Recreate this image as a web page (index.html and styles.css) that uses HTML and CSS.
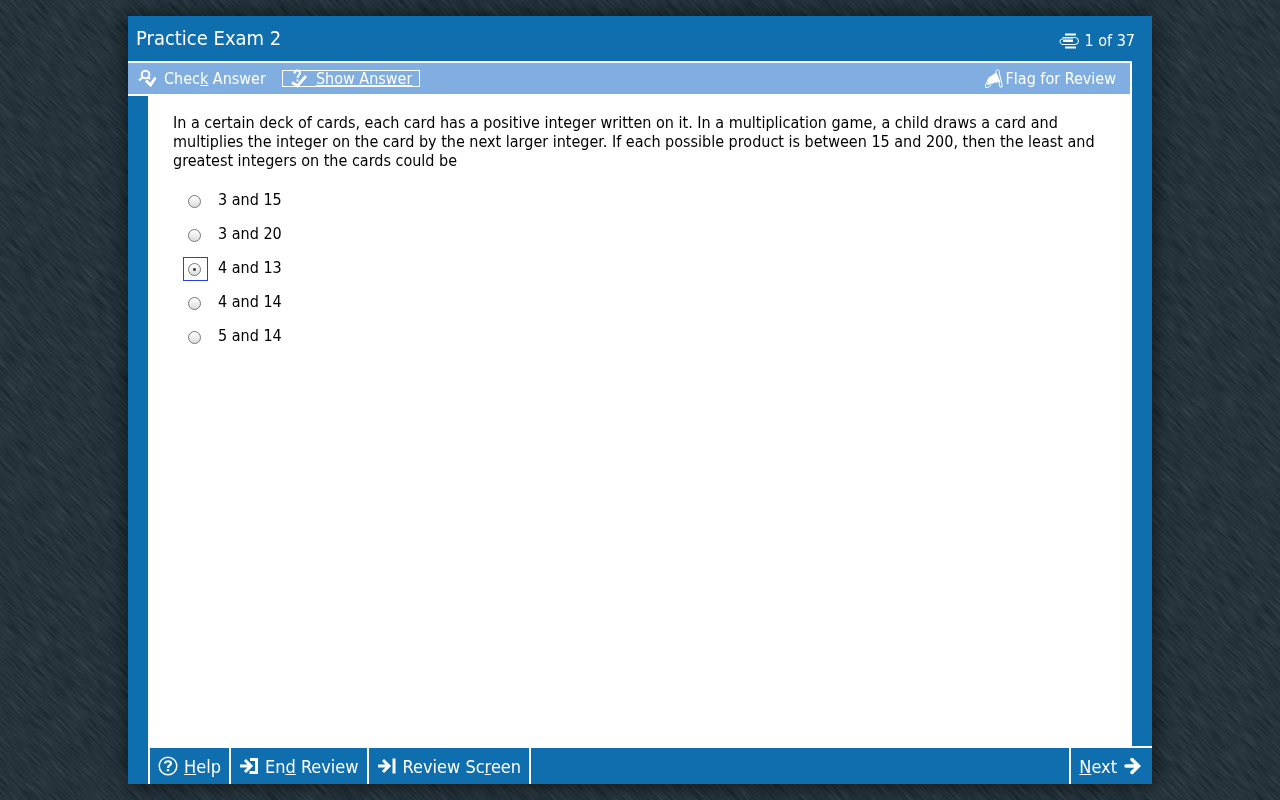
FILE: index.html
```html
<!DOCTYPE html>
<html lang="en">
<head>
    <meta charset="UTF-8">
    <meta name="viewport" content="width=device-width, initial-scale=1.0">
    <title>Practice Exam 2</title>
    <link rel="stylesheet" href="styles.css">
</head>
<body>
    <!-- brushed dark background -->
    <svg class="backdrop" viewBox="0 0 1280 800" preserveAspectRatio="xMidYMid slice" aria-hidden="true">
        <filter id="brushed" x="0" y="0" width="100%" height="100%" color-interpolation-filters="sRGB">
            <feTurbulence type="fractalNoise" baseFrequency="0.04 0.8" numOctaves="2" seed="4"/>
            <feColorMatrix values="0.17 0 0 0 0.060  0.17 0 0 0 0.115  0.17 0 0 0 0.147  0 0 0 0 1"/>
        </filter>
        <rect x="-300" y="-700" width="2200" height="2200" transform="rotate(45 640 400)" filter="url(#brushed)"/>
    </svg>

    <div class="exam">
        <header class="exam-header">
            <h1>Practice Exam 2</h1>
            <div class="progress">
                <svg width="20" height="16" viewBox="0 0 20 16" fill="none" stroke="#fff" aria-hidden="true">
                    <path d="M6 1.500h11M6 14.500h11" stroke-width="2"/>
                    <path d="M3.500 4.500H16a3.500 3.500 0 0 1 0 7H4a3 3 0 0 1-3-3.500a2.500 2.500 0 0 1 2.500-2H14" stroke-width="1"/>
                    <path d="M4 8h10" stroke-width="2"/>
                </svg>
                <span>1 of 37</span>
            </div>
        </header>

        <div class="exam-middle">
            <div class="exam-main">
                <div class="toolbar">
                    <button type="button" class="tool">
                        <svg width="20" height="20" viewBox="0 0 20 20" fill="none" stroke="#fff" stroke-width="2" aria-hidden="true">
                            <circle cx="7.500" cy="5.500" r="3.800"/>
                            <path d="M5 8L1 11.500M10 8l2 2"/>
                            <path d="M8 11.500l4.500 4.500 5-7.500" stroke-width="2.800"/>
                        </svg>
                        <span>Chec<u>k</u> Answer</span>
                    </button>
                    <button type="button" class="tool focused">
                        <svg width="20" height="20" viewBox="0 0 20 20" fill="none" stroke="#fff" stroke-width="2" aria-hidden="true">
                            <path d="M4.500 4.500C4.500 0.500 10 0.500 10 4C10 6 7.500 6 7.500 9"/>
                            <path d="M7.500 10.500v2"/>
                            <path d="M2 13.500l5.500 3.500 8.500-10" stroke-width="2.800"/>
                        </svg>
                        <span>Sh<u>o</u>w Answer</span>
                    </button>
                    <button type="button" class="tool flag">
                        <svg width="20" height="20" viewBox="0 0 20 20" fill="none" stroke="#fff" stroke-width="1" aria-hidden="true">
                            <path d="M5 8.500C8 8 9 4.500 12.500 4.500L16 13C12 12 9 14.500 3.500 15.500C5 13 3.500 11 5 8.500z" fill="#fff"/>
                            <path d="M12.500 4a1.800 1.800 0 1 1 3-1.500V5L18 15.500V18H16L15 13.500M4.500 10L1.500 16v2.500h2.500l3-2.500"/>
                        </svg>
                        <span>Flag for Review</span>
                    </button>
                </div>

                <main class="question">
                    <p id="prompt">In a certain deck of cards, each card has a positive integer written on it. In a multiplication game, a child draws a card and multiplies the integer on the card by the next larger integer. If each possible product is between 15 and 200, then the least and greatest integers on the cards could be</p>

                    <div class="choices" role="radiogroup" aria-labelledby="prompt">
                        <label class="choice">
                            <span class="mark"><input type="radio" name="answer" value="a"></span>
                            <span>3 and 15</span>
                        </label>
                        <label class="choice">
                            <span class="mark"><input type="radio" name="answer" value="b"></span>
                            <span>3 and 20</span>
                        </label>
                        <label class="choice">
                            <span class="mark"><input type="radio" name="answer" value="c" checked></span>
                            <span>4 and 13</span>
                        </label>
                        <label class="choice">
                            <span class="mark"><input type="radio" name="answer" value="d"></span>
                            <span>4 and 14</span>
                        </label>
                        <label class="choice">
                            <span class="mark"><input type="radio" name="answer" value="e"></span>
                            <span>5 and 14</span>
                        </label>
                    </div>
                </main>
            </div>
            <div class="right-rail"></div>
        </div>

        <footer class="exam-footer">
            <button type="button" class="nav">
                <svg width="20" height="20" viewBox="0 0 20 20" fill="none" stroke="#fff" aria-hidden="true">
                    <circle cx="10" cy="10" r="8.750" stroke-width="1.500"/>
                    <path d="M7 7.500C7 4.500 13 4.500 13 7.500C13 9.500 10 9.500 10 12" stroke-width="2.200"/>
                    <path d="M10 13v2.200" stroke-width="2.400"/>
                </svg>
                <span><u>H</u>elp</span>
            </button>
            <button type="button" class="nav">
                <svg width="20" height="20" viewBox="0 0 20 20" fill="none" stroke="#fff" stroke-width="3" aria-hidden="true">
                    <path d="M1 10h11M6 4l6 6-6 6"/>
                    <path d="M11 3.500h6.500v13h-7"/>
                </svg>
                <span>En<u>d</u> Review</span>
            </button>
            <button type="button" class="nav">
                <svg width="20" height="20" viewBox="0 0 20 20" fill="none" stroke="#fff" stroke-width="3" aria-hidden="true">
                    <path d="M1 10h10M6 4l6 6-6 6"/>
                    <path d="M17 2.500v15"/>
                </svg>
                <span>Review Sc<u>r</u>een</span>
            </button>
            <button type="button" class="nav next">
                <span><u>N</u>ext</span>
                <svg width="20" height="20" viewBox="0 0 20 20" fill="none" stroke="#fff" stroke-width="3.500" stroke-linecap="round" aria-hidden="true">
                    <path d="M3 10h12M9 3.500l6.500 6.500L9 16.500"/>
                </svg>
            </button>
        </footer>
    </div>
</body>
</html>
```
FILE: styles.css
```css
* {
    box-sizing: border-box;
}

body {
    margin: 0;
    min-height: 100vh;
    padding: 16px 10%;
    display: flex;
    background-color: #25323b;
    color: #000;
    font-family: "DejaVu Sans Condensed", Tahoma, Verdana, sans-serif;
    font-size: 16px;
    line-height: 19px;
}

.backdrop {
    position: fixed;
    top: 0;
    left: 0;
    width: 100%;
    height: 100%;
    z-index: -1;
}

button {
    border: none;
    background: none;
    padding: 0;
    color: #fff;
    font-family: inherit;
    font-size: 16px;
    cursor: pointer;
}

svg {
    flex: none;
}

.exam {
    flex: 1;
    display: flex;
    flex-direction: column;
    background-color: #0f6fae;
    box-shadow: 0 0 20px rgba(0, 0, 0, 0.6);
}

.exam-header {
    height: 45px;
    padding: 0 17px 0 8px;
    display: flex;
    align-items: center;
    justify-content: space-between;
    color: #fff;
}

.exam-header h1 {
    margin: 0;
    font-size: 20px;
    font-weight: normal;
}

.progress {
    display: flex;
    align-items: center;
    gap: 6px;
    padding-top: 4px;
}

.exam-middle {
    flex: 1;
    display: flex;
}

.exam-main {
    flex: 1;
    display: flex;
    flex-direction: column;
    border-top: 2px solid #fff;
    border-right: 2px solid #fff;
}

.right-rail {
    width: 20px;
    border-bottom: 2px solid #fff;
}

/* toolbar */

.toolbar {
    height: 33px;
    padding: 0 14px 0 10px;
    display: flex;
    align-items: center;
    gap: 16px;
    background-color: #80aee0;
    border-bottom: 2px solid #fff;
}

.tool {
    display: flex;
    align-items: center;
    gap: 6px;
}

.tool.focused {
    height: 17px;
    padding: 0 7px;
    border: 1px solid #fff;
    text-decoration: underline;
}

.tool.flag {
    margin-left: auto;
    gap: 2px;
}

/* question */

.question {
    flex: 1;
    margin-left: 20px;
    padding: 17px 34px 17px 25px;
    background-color: #fff;
}

.question p {
    margin: 0 0 12px;
}

.choices {
    padding-left: 10px;
}

.choice {
    display: flex;
    align-items: center;
    width: max-content;
    height: 34px;
    gap: 10px;
}

.mark {
    width: 25px;
    height: 24px;
    margin-top: 4px;
    padding-left: 4px;
    display: flex;
    align-items: center;
    border: 1px solid transparent;
}

.mark:has(input:checked) {
    border-color: #2a3fe0;
}

.mark input {
    appearance: none;
    width: 13px;
    height: 13px;
    margin: 0;
    border: 1px solid #777;
    border-radius: 50%;
    background: linear-gradient(#fff, #dcdcdc);
}

.mark input:checked {
    background: radial-gradient(circle, #444 1px, transparent 2px), linear-gradient(#fff, #dcdcdc);
}

/* footer */

.exam-footer {
    height: 36px;
    margin-left: 20px;
    display: flex;
    border-left: 2px solid #fff;
}

.nav {
    display: flex;
    align-items: center;
    gap: 6px;
    padding: 0 8px;
    border-right: 2px solid #fff;
    font-size: 18px;
}

.nav.next {
    margin-left: auto;
    padding: 0 9px 0 8px;
    border-right: none;
    border-left: 2px solid #fff;
}
```
